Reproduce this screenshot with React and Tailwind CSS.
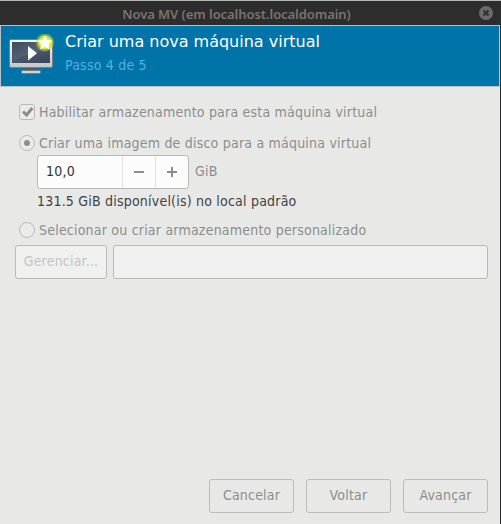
import React from "react";

const Radio = ({ on }) => (
  <span className="flex size-4 shrink-0 items-center justify-center rounded-full border border-[#b9bab7] bg-[#ebebea]">
    {on && <span className="size-1.5 rounded-full bg-[#8b8e8f]" />}
  </span>
);

function MonitorIcon() {
  return (
    <svg width="48" height="42" viewBox="0 0 48 42" className="block shrink-0">
      <defs>
        <linearGradient id="screen" x1="0" y1="0" x2="1" y2="1">
          <stop offset="0" stopColor="#303d50" />
          <stop offset=".5" stopColor="#48556a" />
          <stop offset="1" stopColor="#3a475a" />
        </linearGradient>
        <linearGradient id="frame" x1="0" y1="0" x2="0" y2="1">
          <stop offset="0" stopColor="#fafafa" />
          <stop offset="1" stopColor="#c5c7c7" />
        </linearGradient>
        <radialGradient id="glow">
          <stop offset="0" stopColor="#f8f880" />
          <stop offset=".6" stopColor="#dde82c" />
          <stop offset="1" stopColor="#a4c82c" stopOpacity="0" />
        </radialGradient>
      </defs>
      <rect x="18" y="33" width="10" height="4" fill="#555b60" />
      <rect x="13.5" y="36.5" width="19" height="3" rx="1" fill="#d1d3d3" stroke="#777c80" />
      <rect x="1.5" y="5.5" width="43" height="28" rx="1.5" fill="url(#frame)" stroke="#777e84" />
      <rect x="4" y="8" width="38" height="21" fill="url(#screen)" />
      <path d="M4 8h38v8Q22 18 4 27z" fill="#fff" opacity=".07" />
      <path d="M20 12v14.500l9-7.250z" fill="#fff" />
      <circle cx="37" cy="8.5" r="10" fill="url(#glow)" />
      <path d="M37 2l2 4.300 4.800.5-3.500 3.300 1 4.900-4.300-2.500-4.300 2.500 1-4.900-3.500-3.300 4.800-.5z" fill="#fff" stroke="#fff" strokeWidth=".6" strokeLinejoin="round" />
    </svg>
  );
}

const FooterButton = ({ children }) => (
  <button className="h-[34px] w-[85px] rounded-[3px] border border-[#bbbcb9] bg-[#e8e8e6] pb-0.5 text-[#8b8e8f]">
    {children}
  </button>
);

export default function App() {
  return (
    <div className="flex h-[524px] w-[501px] flex-col overflow-hidden bg-[#2d2d2d] font-['DejaVu_Sans_Condensed','DejaVu_Sans',sans-serif] text-[14px] leading-5 tracking-[0.21px] whitespace-nowrap text-[#8b8e8f]">
      <div className="h-px shrink-0 bg-[#b5b8b5]" />
      <div className="relative flex h-6 shrink-0 items-center justify-center pr-7 font-['Noto_Sans',sans-serif] text-[13px] font-semibold tracking-[-0.06px] text-[#7c7370]">
        <span className="pt-px">Nova MV (em localhost.localdomain)</span>
        <svg width="14" height="14" viewBox="0 0 14 14" className="absolute top-[5px] right-2">
          <circle cx="7" cy="7" r="7" fill="#6b6b6b" />
          <path d="M4.5 4.5l5 5m0-5l-5 5" stroke="#2d2d2d" strokeWidth="1.8" />
        </svg>
      </div>

      <main className="mr-px flex flex-1 flex-col bg-[#e8e8e6]">
        <header className="flex h-[62px] shrink-0 border border-[#bbc1c1] bg-[#0073a9] pt-2 pl-[7px]">
          <MonitorIcon />
          <div className="pl-[9px]">
            <h1 className="font-['DejaVu_Sans',sans-serif] text-[16px] leading-4 tracking-normal text-white">Criar uma nova máquina virtual</h1>
            <p className="mt-[5px] leading-5 text-[#55aedf]">Passo 4 de 5</p>
          </div>
        </header>

        <section className="flex flex-col pr-3 pl-[15px]">
          <label className="mt-[15px] flex h-5 items-center gap-1 pl-1">
            <span className="flex size-4 shrink-0 items-center justify-center rounded-[3px] border border-[#b9bab7] bg-[#ebebea]">
              <svg width="14" height="14" viewBox="0 0 14 14" className="block shrink-0">
                <path d="M3 6.5l3.5 3.5L12.3 3" fill="none" stroke="#8b8e8f" strokeWidth="3" />
              </svg>
            </span>
            Habilitar armazenamento para esta máquina virtual
          </label>
          <label className="mt-[11px] flex h-5 items-center gap-1 pl-1">
            <Radio on />
            Criar uma imagem de disco para a máquina virtual
          </label>
          <div className="mt-[2px] flex h-[34px] items-center gap-[6px] pl-[22px]">
            <div className="flex h-[34px] w-[152px] rounded-[3px] border border-[#b9bab7] bg-[#fcfcfc]">
              <span className="flex flex-1 items-center pb-0.5 pl-2 text-[#2e3436]">10,0</span>
              <span className="flex w-[33px] items-center justify-center border-l border-[#e3e3e2]">
                <span className="h-0.5 w-2.5 bg-[#8b8e8f]" />
              </span>
              <span className="flex w-[33px] items-center justify-center border-l border-[#e3e3e2]">
                <svg width="10" height="10" viewBox="0 0 10 10"><path d="M5 0v10M0 5h10" stroke="#8b8e8f" strokeWidth="2" /></svg>
              </span>
            </div>
            <span className="pb-0.5">GiB</span>
          </div>
          <p className="mt-[2px] mb-px pl-[22px] text-[#3f4345]">131.5 GiB disponível(is) no local padrão</p>
          <label className="mt-2 flex h-5 items-center gap-1 pl-1">
            <Radio />
            Selecionar ou criar armazenamento personalizado
          </label>
          <div className="mt-[5px] flex h-[34px] gap-[6px]">
            <button className="w-[92px] rounded-[3px] border border-[#b9bab7] bg-[#f0f0f0] pb-0.5 text-[#c3c5c3]">Gerenciar...</button>
            <div className="flex-1 rounded-[3px] border border-[#b9bab7] bg-[#f0f0f0]" />
          </div>
        </section>

        <footer className="mt-auto flex justify-end gap-3 pr-3 pb-[11px]">
          <FooterButton>Cancelar</FooterButton>
          <FooterButton>Voltar</FooterButton>
          <FooterButton>Avançar</FooterButton>
        </footer>
      </main>
    </div>
  );
}
